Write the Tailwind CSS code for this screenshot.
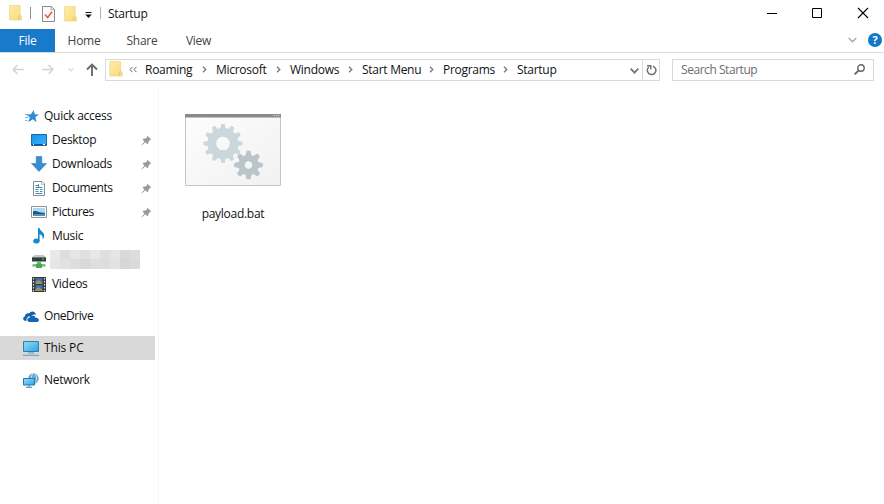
<!DOCTYPE html>
<html lang="en">
<head>
<meta charset="utf-8">
<title>Startup</title>
<script src="https://cdn.jsdelivr.net/npm/@tailwindcss/browser@4"></script>
</head>
<body class="w-[884px] h-[504px] overflow-hidden bg-white font-['Open_Sans','Noto_Sans',sans-serif] text-[12px] leading-4 tracking-[-0.28px] text-[#111]">
<svg class="absolute w-0 h-0">
  <defs>
    <linearGradient id="fold" x1="0" x2="1" y2="1"><stop stop-color="#ffeca5"/><stop offset="1" stop-color="#f8da7c"/></linearGradient>
    <linearGradient id="blue" x1="0" x2="1" y2="1"><stop stop-color="#1c8fe6"/><stop offset="1" stop-color="#38b6ff"/></linearGradient>
    <linearGradient id="screen" x1="0" x2="1" y2="1"><stop stop-color="#9adcfa"/><stop offset="1" stop-color="#2ba3e3"/></linearGradient>
    <linearGradient id="paper" x1="0" x2="1" y2="1"><stop stop-color="#fdfdfd"/><stop offset="1" stop-color="#f1f1f1"/></linearGradient>
    <symbol id="folder" viewBox="0 0 14 17"><path d="M.5.5h11.5v10.500l1.500 1v4H.5z" fill="url(#fold)" stroke="#efd78a" stroke-width=".8"/><path d="M10.500 15.500v-3l1.500-1.500" fill="none" stroke="#e2c568"/></symbol>
    <symbol id="pin" viewBox="0 0 12 12"><path d="M7 .8 11.200 5 9.800 5.400 8.300 7l-.4 2.300-1 .7-2-2L1 11.300l-.5-.5L3.700 7 1.800 5l.7-1 2.600-.2L6.700 2.200z" fill="#909ba3"/></symbol>
    <symbol id="chev" viewBox="0 0 5 7"><path d="M1 .8 3.800 3.500 1 6.200" fill="none" stroke="#777" stroke-width="1.300"/></symbol>
  </defs>
</svg>

<header class="h-[29px] flex items-center relative pl-[9px]">
  <svg class="w-[13px] h-[16px] -mt-[3px]"><use href="#folder"/></svg>
  <i class="w-px h-3 bg-[#8b8b8b] ml-[8px] mr-[11px] -mt-[3px]"></i>
  <svg class="w-[13px] h-[16px] -mt-0.5" viewBox="0 0 13 16"><path d="M.5.500h8.700l3.300 3v12H.5z" fill="#fafafa" stroke="#8b8b8b"/><path d="M9 .5v3.200h3.500" fill="none" stroke="#9b9b9b" stroke-width=".8"/><path d="m3 8.500 2.700 3L10 5.800" fill="none" stroke="#dc603a" stroke-width="1.500"/></svg>
  <svg class="w-[13px] h-[16px] ml-[9px] -mt-px"><use href="#folder"/></svg>
  <svg class="w-[7px] h-[6px] ml-[8px]" viewBox="0 0 7 6"><path d="M.5.5h6" stroke="#111"/><path d="M.2 2.500h6.600L3.500 5.900z" fill="#111"/></svg>
  <i class="w-px h-3 bg-[#b0b0b0] ml-[8px] mr-[7px] -mt-[3px]"></i>
  <span class="-mt-px">Startup</span>
  <div class="absolute left-[766px] top-[7px] flex gap-[33px]">
    <svg class="w-3 h-3" viewBox="0 0 12 12"><path d="M1 6.500h10" stroke="#000"/></svg>
    <svg class="w-3 h-3" viewBox="0 0 12 12"><path d="M1.500 1.500h9v9h-9z" fill="none" stroke="#000"/></svg>
    <svg class="w-3 h-3 ml-px" viewBox="0 0 12 12"><path d="m1 1 10 10M11 1 1 11" stroke="#000" stroke-width="1.100"/></svg>
  </div>
</header>

<nav class="h-6 flex items-stretch border-b border-[#dadbdc] text-[#444]">
  <div class="w-[55px] bg-[#1979ca] text-white grid place-items-center -mb-px h-[23px]">File</div>
  <div class="w-[58px] grid place-items-center h-6">Home</div>
  <div class="w-[58px] grid place-items-center h-6">Share</div>
  <div class="w-[55px] grid place-items-center h-6">View</div>
  <div class="ml-auto flex items-center gap-[11px] pr-[2px]">
    <svg class="w-[9px] h-[6px] -mt-px" viewBox="0 0 9 6"><path d="m.7 1 3.800 3.800L8.300 1" fill="none" stroke="#a5a5a5" stroke-width="1.300"/></svg>
    <span class="size-[14px] -mt-0.5 rounded-full bg-[#1278c8] text-white text-[11px] font-bold leading-[14px] text-center tracking-normal">?</span>
  </div>
</nav>

<div class="h-[35px] flex items-center pl-3 pb-[2px]">
  <svg class="w-3 h-[11px]" viewBox="0 0 12 11"><path d="M12 5.500H1.200M5.500 1 1 5.500 5.500 10" fill="none" stroke="#d3d3d3" stroke-width="1.500"/></svg>
  <svg class="w-3 h-[11px] ml-[18px]" viewBox="0 0 12 11"><path d="M0 5.500h10.800M6.500 1 11 5.500 6.500 10" fill="none" stroke="#d3d3d3" stroke-width="1.500"/></svg>
  <svg class="w-[6px] h-1 ml-[14px]" viewBox="0 0 6 4"><path d="m.5.500 2.500 2.500L5.500.5" fill="none" stroke="#d8d8d8" stroke-width="1.200"/></svg>
  <svg class="w-3 h-[13px] ml-[12px]" viewBox="0 0 12 13"><path d="M6 13V1.500M1 6.500l5-5 5 5" fill="none" stroke="#6b6b6b" stroke-width="1.900"/></svg>
  <div class="w-[555px] h-[22px] ml-[7px] border border-[#d9d9d9] flex items-center">
    <svg class="w-[14px] h-[16px] ml-[3px] -mt-0.5"><use href="#folder"/></svg>
    <svg class="w-2 h-[7px] ml-[6px] mr-2" viewBox="0 0 8 7"><path d="M3.500.8 1 3.500l2.500 2.700M7.500.8 5 3.500l2.500 2.700" fill="none" stroke="#666"/></svg>
    <span class="w-[57px]">Roaming</span><svg class="w-[5px] h-[7px] mr-[9px]"><use href="#chev"/></svg>
    <span class="w-[60px]">Microsoft</span><svg class="w-[5px] h-[7px] mr-[9px]"><use href="#chev"/></svg>
    <span class="w-[58px]">Windows</span><svg class="w-[5px] h-[7px] mr-[9px]"><use href="#chev"/></svg>
    <span class="w-[67px]">Start Menu</span><svg class="w-[5px] h-[7px] mr-[9px]"><use href="#chev"/></svg>
    <span class="w-[60px]">Programs</span><svg class="w-[5px] h-[7px] mr-[9px]"><use href="#chev"/></svg>
    <span>Startup</span>
    <div class="ml-auto h-full flex items-center">
      <svg class="w-[9px] h-[6px] mr-[3px] mt-0.5" viewBox="0 0 9 6"><path d="m.7.700 3.800 4 3.800-4" fill="none" stroke="#777" stroke-width="1.800"/></svg>
      <div class="border-l border-[#d9d9d9] w-[17px] h-full grid place-items-center">
        <svg class="w-[11px] h-3" viewBox="0 0 11 12"><path d="M7 2.200a4.300 4.300 0 1 1-4.200.8M1 1.800h3.800v3.700" fill="none" stroke="#707070" stroke-width="1.500"/></svg>
      </div>
    </div>
  </div>
  <div class="w-[202px] h-[22px] ml-3 border border-[#d9d9d9] flex items-center justify-between pl-2 pr-2 text-[#6d6d6d]">
    <span class="tracking-[-0.45px]">Search Startup</span>
    <svg class="w-[11px] h-[11px]" viewBox="0 0 11 11"><circle cx="7" cy="4" r="3.200" fill="none" stroke="#666" stroke-width="1.400"/><path d="M4.700 6.300.7 10.300" stroke="#666" stroke-width="1.900"/></svg>
  </div>
</div>

<main class="flex h-[416px]">
  <aside class="w-[159px] border-r border-[#f5f5f5] pt-4">
    <div class="h-6 flex items-center pl-[25px]">
      <svg class="w-[14px] h-[13px] mr-[5px]" viewBox="0 0 14 13"><path d="m8.700.1 1.100 4.200 4.200.3-3.600 2.300 1.200 5.300-3.700-2.900-4.600 2.900L4.900 7.300 1 4.500l4.900-.3z" fill="#2d8cd8"/><path d="M0 4.500h2.500M.2 7.500h3M0 10.500h2.500" stroke="#65b3e8"/></svg>Quick access</div>
    <div class="h-6 flex items-center pl-[31px]">
      <svg class="w-4 h-3 mr-[5px]" viewBox="0 0 16 12"><path d="M.5.5h15v11H.5z" fill="url(#blue)" stroke="#1769ac"/><path d="M1 10.500h14" stroke="#13548d"/><path d="M2 10.500h1M12 10.500h2" stroke="#fff"/></svg>Desktop
      <svg class="w-[11px] h-[11px] ml-auto mr-[6px]"><use href="#pin"/></svg></div>
    <div class="h-6 flex items-center pl-[31px]">
      <svg class="w-4 h-4 mr-[5px]" viewBox="0 0 16 16"><path d="M5.200.5h5.600v7h4.700L8 15.500.5 7.500h4.700z" fill="#3a8cd2" stroke="#347fbd" stroke-width=".6"/></svg>Downloads
      <svg class="w-[11px] h-[11px] ml-auto mr-[6px]"><use href="#pin"/></svg></div>
    <div class="h-6 flex items-center pl-[33px]">
      <svg class="w-3 h-[15px] mr-[7px]" viewBox="0 0 12 15"><path d="M.5.5H9l2.500 2.500v11.500H.5z" fill="#fff" stroke="#848f95"/><path d="M8.500 1v2.500H11" fill="none" stroke="#9da6aa" stroke-width=".7"/><path d="M2.500 4.500h3M2.500 6.500h7M2.500 8.500h3M7 8.500h2.500M2.500 10.500h3M7 10.500h2.500M2.500 12.500h7M5.500 3v3" stroke="#3d91bd"/></svg><span class="tracking-[-0.4px]">Documents</span>
      <svg class="w-[11px] h-[11px] ml-auto mr-[6px]"><use href="#pin"/></svg></div>
    <div class="h-6 flex items-center pl-[31px]">
      <svg class="w-4 h-3 mr-[5px]" viewBox="0 0 16 12"><path d="M.5.5h15v11H.5z" fill="#fff" stroke="#929292"/><path d="M2 2h12v8H2z" fill="#a9d9f5"/><path d="M2 5.500c3-1.500 5 1.500 12 1.500v3H2z" fill="#285568"/><path d="M2 8.500c5-1 8 0 12-.5v2H2z" fill="#4b91c5"/></svg><span class="tracking-[-0.4px]">Pictures</span>
      <svg class="w-[11px] h-[11px] ml-auto mr-[6px]"><use href="#pin"/></svg></div>
    <div class="h-6 flex items-center pl-[33px]">
      <svg class="w-3 h-4 mr-[7px]" viewBox="0 0 12 16"><ellipse cx="3.400" cy="13" rx="3.200" ry="2.500" fill="#1689d3"/><path d="M5 0h1.500c.5 3 5 4 4.700 8.200-.1 1.300-.8 2.300-1.700 3 .7-3-.8-4.300-2.900-5V13H5z" fill="#1689d3"/></svg>Music</div>
    <div class="h-6 flex items-center pl-[32px]">
      <svg class="w-[14px] h-[13px] mr-[4px] mt-[3px]" viewBox="0 0 14 14" preserveAspectRatio="none"><path d="M2.500 0h9L14 2.500H0z" fill="#c3c6c8"/><path d="M0 2.500h14v4.500H0z" fill="#333b3c"/><path d="M10 4.500h2" stroke="#57e079"/><path d="M5 7h4v3h4.500v2.500h-13V10H5z" fill="#61b86d"/><path d="M4 9.500h6V14H4z" fill="#4ca65a"/></svg>
      <div class="grid grid-cols-[10px_10px_10px_10px_10px_10px_10px_10px_10px] grid-rows-[9px_10px] h-[19px] -mt-px">
        <i class="bg-[#e9e9e9]"></i><i class="bg-[#dddddd]"></i><i class="bg-[#e5e5e5]"></i><i class="bg-[#e0e0e0]"></i><i class="bg-[#e8e8e8]"></i><i class="bg-[#dfdfdf]"></i><i class="bg-[#e5e5e5]"></i><i class="bg-[#dadada]"></i><i class="bg-[#dddddd]"></i>
        <i class="bg-[#e6e6e6]"></i><i class="bg-[#e2e2e2]"></i><i class="bg-[#dedede]"></i><i class="bg-[#d9d9d9]"></i><i class="bg-[#dedede]"></i><i class="bg-[#dddddd]"></i><i class="bg-[#e2e2e2]"></i><i class="bg-[#d6d6d6]"></i><i class="bg-[#dadada]"></i>
      </div></div>
    <div class="h-6 flex items-center pl-[32px]">
      <svg class="w-[14px] h-[15px] mr-[6px]" viewBox="0 0 14 15"><path d="M0 0h14v15H0z" fill="#30383f"/><path d="M1.500 1v14M12.500 1v14" stroke="#e0e4e8" stroke-width="1.200" stroke-dasharray="1.500 1.500"/><path d="M3.500 1h7v6h-7z" fill="#4270ae"/><path d="M3.500 8h7v6h-7z" fill="#4270ae"/><path d="m3.500 5 3-2 4 3v1h-7zM3.500 12l3-2 4 3v1h-7z" fill="#9c9653"/></svg>Videos</div>
    <div class="h-6 mt-2 flex items-center pl-[23px]">
      <svg class="w-4 h-[11px] mr-[5px]" viewBox="0 0 16 11"><path d="M3.300 10H2.500C-.5 9.500-.5 6 2 5.500 2 3 4.500 1.800 6 2.500 8-.8 12.500 0 13 4c-2-1-4-.2-4.800 1.300C5.500 4.700 3.300 6.500 3.300 10z" fill="#0d64ad"/><path d="M6.700 11C3.500 10.800 3.600 7 6.400 6.700c.6-2.600 5.200-3 6.200 0C16.500 6.500 17 10.700 14 11z" fill="#1169b4"/></svg><span class="tracking-[-0.45px]">OneDrive</span></div>
    <div class="h-6 mt-2 w-[155px] bg-[#d9d9d9] flex items-center pl-[23px]">
      <svg class="w-4 h-[15px] mr-[5px]" viewBox="0 0 16 15"><path d="M.5.5h15v10H.5z" fill="url(#screen)" stroke="#397ca5"/><path d="M5 12h6M0 14.300h16" stroke="#6399b5"/></svg><span class="tracking-[-0.15px]">This PC</span></div>
    <div class="h-6 mt-2 flex items-center pl-[23px]">
      <svg class="w-4 h-[15px] mr-[5px]" viewBox="0 0 16 15"><circle cx="10.500" cy="5.500" r="5.200" fill="#6aa7d1"/><path d="M10 .5c-2 2-2 5-1 7M12 .7c2 3 2 6 0 9" fill="none" stroke="#bfe0f1"/><path d="M.5 5.500h11v6.500H.5z" fill="url(#screen)" stroke="#2879a8"/><path d="M3 14.300h6M6 12v2" stroke="#3982a8"/></svg>Network</div>
  </aside>

  <section class="pl-[26px] pt-[26px]">
    <figure class="w-24 flex flex-col items-center">
      <svg class="w-24 h-[72px]" viewBox="0 0 96 72">
        <path d="M.5.5h95v71H.5z" fill="url(#paper)" stroke="#c5c5c5"/><path d="M0 0h96v3.500H0z" fill="#898989"/><path d="M88.500 1.500h6" stroke="#d5d5d5" stroke-dasharray="1.500 1"/>
        <g transform="translate(38 29.500)" fill="#ccd7dd">
          <g id="teeth4"><path id="tooth" d="M-2.900-14.500-1.600-19.500h3.200l1.300 5z"/><use href="#tooth" transform="rotate(30)"/><use href="#tooth" transform="rotate(60)"/><use href="#tooth" transform="rotate(90)"/></g>
          <use href="#teeth4" transform="rotate(120)"/><use href="#teeth4" transform="rotate(240)"/>
          <circle r="11.400" fill="none" stroke="#ccd7dd" stroke-width="8"/>
          <circle r="7.300" fill="none" stroke="#b5c2ca" stroke-width=".6"/>
        </g>
        <g transform="translate(63.500 51)" fill="#b9c4cb">
          <g id="cogs4"><path id="cog" d="M-3-9.500-2-14.300h4l1 4.800z"/><use href="#cog" transform="rotate(45)"/><use href="#cog" transform="rotate(90)"/><use href="#cog" transform="rotate(135)"/></g>
          <use href="#cogs4" transform="rotate(180)"/>
          <circle r="7.300" fill="none" stroke="#b9c4cb" stroke-width="6"/>
          <circle r="4.300" fill="none" stroke="#a5b1b8" stroke-width=".6"/>
        </g>
      </svg>
      <figcaption class="mt-5">payload.bat</figcaption>
    </figure>
  </section>
</main>
</body>
</html>
